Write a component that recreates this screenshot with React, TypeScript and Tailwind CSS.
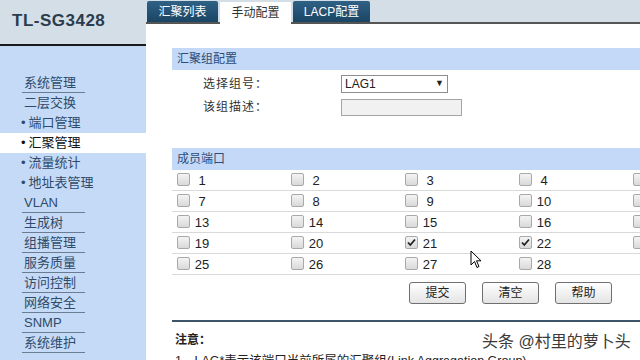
import React from 'react';

const FONT = '"Liberation Sans", "Noto Sans CJK SC", sans-serif';

type MenuItem = { label: string; sub?: boolean; active?: boolean; line?: boolean };

const menu: MenuItem[] = [
    { label: '系统管理', line: true },
    { label: '二层交换' },
    { label: '端口管理', sub: true },
    { label: '汇聚管理', sub: true, active: true },
    { label: '流量统计', sub: true },
    { label: '地址表管理', sub: true },
    { label: 'VLAN', line: true },
    { label: '生成树', line: true },
    { label: '组播管理', line: true },
    { label: '服务质量', line: true },
    { label: '访问控制', line: true },
    { label: '网络安全', line: true },
    { label: 'SNMP', line: true },
    { label: '系统维护', line: true },
];

const checked = [21, 22];

const Checkbox: React.FC<{ on?: boolean }> = ({ on }) => (
    <span className="relative inline-block w-[13px] h-[13px] rounded-[2px] border border-[#a9a9a9] bg-gradient-to-b from-[#f4f4f4] to-[#d9d9d9] shrink-0">
        {on && (
            <svg viewBox="0 0 13 13" className="absolute -left-[1px] -top-[1px] w-[13px] h-[13px]">
                <path d="M3 6.5 L5.3 9 L10 3.5" fill="none" stroke="#222" strokeWidth="1.8" />
            </svg>
        )}
    </span>
);

const Tab: React.FC<{ label: string; width: string }> = ({ label, width }) => (
    <div
        className={`${width} h-[21px] bg-gradient-to-b from-[#2f6186] to-[#1b4564] text-white text-[12px] flex items-center justify-center rounded-t-[2px]`}
    >
        {label}
    </div>
);

export default function App() {
    // 5 columns visible; the 5th shows only its checkbox at the window edge
    const rows: number[][] = [];
    for (let r = 0; r < 5; r++) {
        const row: number[] = [];
        for (let c = 0; c < 5; c++) {
            const n = r * 6 + c + 1;
            if (n <= 28) row.push(n);
        }
        rows.push(row);
    }

    return (
        <div className="relative w-[640px] h-[360px] overflow-hidden flex bg-white" style={{ fontFamily: FONT }}>
            {/* Sidebar */}
            <div className="w-[146px] shrink-0 flex flex-col bg-[#c5daf6]">
                <div className="h-[46px] shrink-0 bg-[#d4dee6] border-b-2 border-[#1a1a1a] flex items-center pl-[12px] pb-[2px]">
                    <span className="text-[17px] font-bold text-[#2b3c4e] tracking-[0.5px]">TL-SG3428</span>
                </div>
                <div className="pt-[27px] flex flex-col shrink-0">
                    {menu.map(item => (
                        <div
                            key={item.label}
                            className={`h-[20px] shrink-0 flex items-center ${item.active ? 'bg-white' : ''}`}
                        >
                            {item.sub ? (
                                <span className={`pl-[21px] text-[13px] ${item.active ? 'text-[#111]' : 'text-[#2e4b6b]'}`}>
                                    <span className="mr-[3px]">•</span>
                                    {item.label}
                                </span>
                            ) : (
                                <span
                                    className={`ml-[22px] w-[63px] pl-[2px] h-[20px] leading-[19px] text-[13px] text-[#2e4b6b] ${item.line ? 'border-b border-[#6a7c92]' : ''}`}
                                >
                                    {item.label}
                                </span>
                            )}
                        </div>
                    ))}
                </div>
            </div>

            {/* Main */}
            <div className="flex-1 flex flex-col min-w-0">
                <div className="h-[24px] shrink-0 bg-[#d4dee6] flex items-end pl-[1px] gap-[2px] border-b-2 border-[#555]">
                    <Tab label="汇聚列表" width="w-[71px]" />
                    <div className="w-[71px] h-[22px] -mb-[2px] bg-white text-[#333] text-[12px] flex items-center justify-center">
                        手动配置
                    </div>
                    <Tab label="LACP配置" width="w-[77px]" />
                </div>

                <div className="pl-[26px] pt-[24px] flex flex-col">
                    {/* 汇聚组配置 */}
                    <div className="h-[22px] bg-[#c3d9f7] flex items-center pl-[5px] text-[12px] text-[#2e4c78]">汇聚组配置</div>
                    <div className="h-[24px] flex items-center mt-[2px]">
                        <span className="w-[169px] pl-[31px] text-[12px] text-[#333] tracking-[1px]">选择组号：</span>
                        <div className="w-[107px] h-[18px] border border-[#8e8e8e] flex items-center justify-between px-[3px] text-[12px] text-[#222]">
                            <span>LAG1</span>
                            <span className="text-[9px]">▼</span>
                        </div>
                    </div>
                    <div className="h-[22px] flex items-center">
                        <span className="w-[169px] pl-[31px] text-[12px] text-[#333] tracking-[1px]">该组描述：</span>
                        <div className="w-[121px] h-[17px] border border-[#a5a5a5] bg-[#f1f1f1]" />
                    </div>

                    {/* 成员端口 */}
                    <div className="mt-[30px] h-[22px] bg-[#c3d9f7] flex items-center pl-[5px] text-[12px] text-[#2e4c78]">成员端口</div>
                    <div className="flex flex-col">
                        {rows.map((row, i) => (
                            <div key={i} className="h-[21px] flex items-center border-b border-[#d9d9d9]">
                                {row.map((n, c) => (
                                    <div key={n} className="w-[114px] shrink-0 flex items-center pl-[5px] pb-[2px]">
                                        <Checkbox on={checked.includes(n)} />
                                        {c < 4 && (
                                            <span className="w-[18px] ml-[2px] text-center text-[13px] text-[#222] translate-y-[2px] pl-[2px]">
                                                {n}
                                            </span>
                                        )}
                                    </div>
                                ))}
                            </div>
                        ))}
                    </div>

                    {/* Buttons */}
                    <div className="flex gap-[16px] pl-[237px] mt-[7px]">
                        {['提交', '清空', '帮助'].map(b => (
                            <button
                                key={b}
                                className="w-[57px] h-[22px] rounded-[3px] border border-[#6f6f6f] bg-gradient-to-b from-white to-[#e4e4e4] text-[12px] text-[#222]"
                            >
                                {b}
                            </button>
                        ))}
                    </div>

                    <div className="mt-[16px] h-[2px] bg-[#3d5368]" />
                    <div className="pt-[9px] pl-[3px] text-[12px] font-bold text-[#222]">注意：</div>
                    <div className="pt-[3px] pl-[3px] text-[12.5px] text-[#222] whitespace-nowrap">
                        1、LAG*表示该端口当前所属的汇聚组(Link Aggregation Group)
                    </div>
                </div>
            </div>

            {/* Watermark */}
            <div className="absolute left-[482px] top-[330px] text-[16px] text-[#3a3a3a] whitespace-nowrap" style={{ textShadow: '0 0 2px #fff' }}>
                头条 @村里的萝卜头
            </div>

            {/* Mouse cursor */}
            <svg viewBox="0 0 12 19" className="absolute left-[470px] top-[250px] w-[12px] h-[19px]">
                <path d="M1 1 L1 15 L4.5 11.5 L7 17.5 L9 16.5 L6.5 10.8 L11 10.8 Z" fill="#fff" stroke="#000" strokeWidth="1" />
            </svg>
        </div>
    );
}
